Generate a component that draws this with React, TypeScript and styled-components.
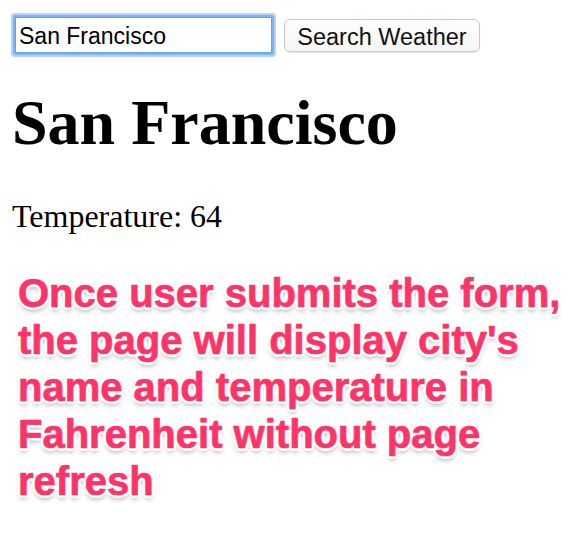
import React, { useState } from 'react';
import styled, { createGlobalStyle } from 'styled-components';

const GlobalStyle = createGlobalStyle`
  body { margin: 0; background: #fff; font-family: "Liberation Serif", "Times New Roman", serif; }
`;

const Page = styled.div` padding: 17px 12px 0 12px; `;
const SearchForm = styled.form` display: flex; align-items: flex-start; gap: 12px; `;
const CityInput = styled.input`
  width: 257px; height: 36px; box-sizing: border-box;
  margin: 0 0 0 3px; padding: 2px 3px 0 3px;
  font-family: "Liberation Sans", Arial, sans-serif; font-size: 23px; color: #000;
  border: 1px solid #6a9fe6; border-radius: 1px;
  box-shadow: 0 0 0 2px #80b3f2, 0 0 1px 4px rgba(130, 180, 245, 0.6);
  outline: none;
`;
const SearchButton = styled.button`
  width: 196px; height: 33px; margin-top: 2px; padding: 4px 0 0 0;
  font-family: "Liberation Sans", Arial, sans-serif; font-size: 23.5px; color: #111;
  background: linear-gradient(#ffffff, #f6f6f6);
  border: 1px solid #c8c8c8; border-radius: 6px;
  box-shadow: 0 1px 1px rgba(0, 0, 0, 0.1);
`;
const CityName = styled.h1` margin: 33px 0 0 0; font-size: 64px; font-weight: bold; line-height: normal; `;
const Temperature = styled.p` margin: 38px 0 0 0; font-size: 32px; line-height: normal; `;
const Note = styled.p`
  margin: 35px 0 0 6px;
  font-family: "Liberation Sans", Arial, sans-serif; font-weight: bold;
  font-size: 40px; line-height: 47px; color: #fe3468;
  -webkit-text-stroke: 0.7px #fe3468;
  text-shadow:
    -2px -2px 0 #fff, 2px -2px 0 #fff, -2px 2px 0 #fff, 2px 2px 0 #fff,
    0 -3px 0 #fff, 0 3px 0 #fff, -3px 0 0 #fff, 3px 0 0 #fff,
    0 4px 5px rgba(0, 0, 0, 0.35);
`;

export default function App() {
  const [city, setCity] = useState('San Francisco');
  return (
    <>
      <GlobalStyle />
      <Page>
        <SearchForm onSubmit={(e) => e.preventDefault()}>
          <CityInput value={city} onChange={(e) => setCity(e.target.value)} />
          <SearchButton type="submit">Search Weather</SearchButton>
        </SearchForm>
        <CityName>San Francisco</CityName>
        <Temperature>Temperature: 64</Temperature>
        <Note>
          Once user submits the form,<br />
          the page will display city's<br />
          name and temperature in<br />
          Fahrenheit without page<br />
          refresh
        </Note>
      </Page>
    </>
  );
}
